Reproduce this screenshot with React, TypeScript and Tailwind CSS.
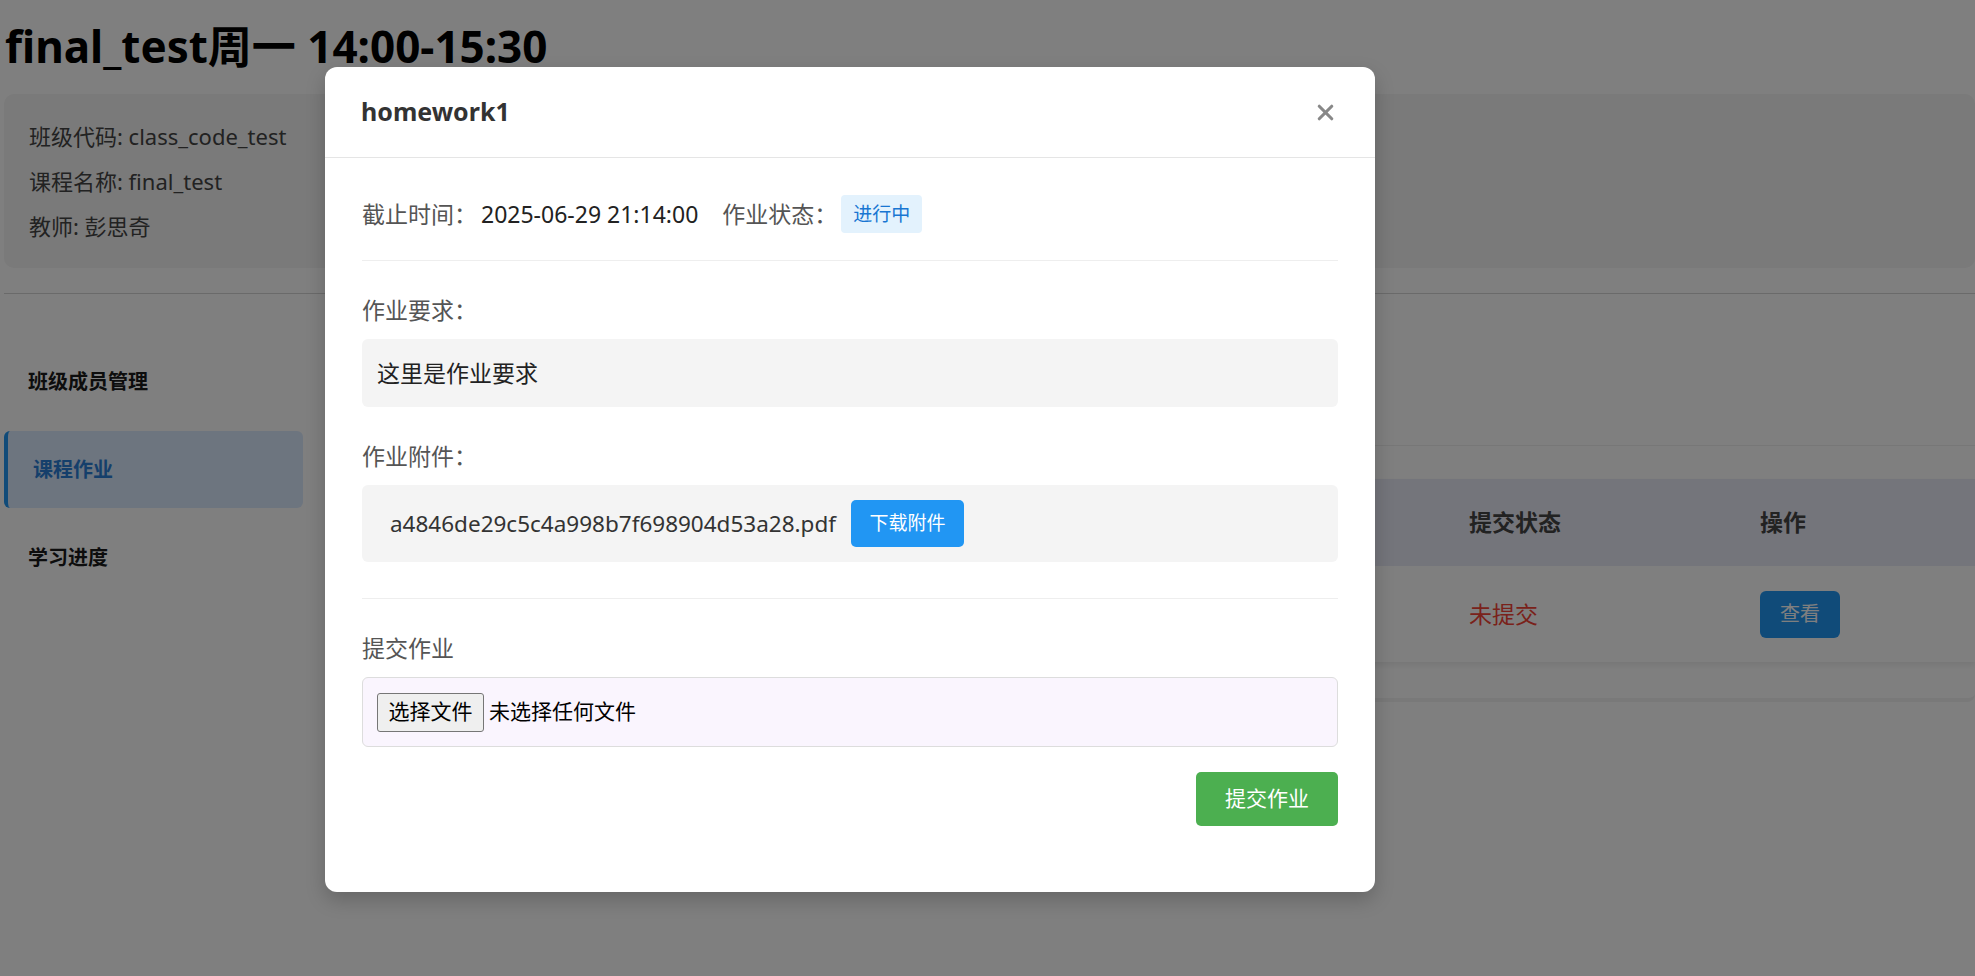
import { X } from 'lucide-react'

const sideItems = [
  { label: '班级成员管理', active: false },
  { label: '课程作业', active: true },
  { label: '学习进度', active: false },
]

function PageBehind() {
  return (
    <div className="pl-[4px]">
      <h1 className="pt-[20px] pl-[1px] text-[44px] font-bold leading-[52px] text-black">
        final_test周一 14:00-15:30
      </h1>

      <div className="mt-[22px] rounded-[10px] bg-[#f4f4f4] pt-[20px] pb-[19px] pl-[25px] text-[22px] leading-[45px] text-[#444]">
        <p>班级代码: class_code_test</p>
        <p>课程名称: final_test</p>
        <p>教师: 彭思奇</p>
      </div>

      <div className="mt-[25px] border-t border-[#d5d5d5]" />

      <div className="flex">
        <nav className="flex w-[299px] flex-col gap-[11px] pt-[49px]">
          {sideItems.map((item) =>
            item.active ? (
              <div
                key={item.label}
                className="flex h-[77px] items-center rounded-[6px] border-l-4 border-[#2196f3] bg-[#dbeafe] pl-[25px] text-[20px] font-bold text-[#2a7fd6]"
              >
                {item.label}
              </div>
            ) : (
              <div key={item.label} className="flex h-[77px] items-center pl-[24px] text-[20px] font-bold text-[#1a1a1a]">
                {item.label}
              </div>
            )
          )}
        </nav>

        {/* the left part of this table sits under the modal */}
        <main className="ml-[40px] flex-1">
          <div className="h-[152px] border-b border-[#eeeeee]" />

          <div className="mt-[33px] bg-white shadow-[0_3px_6px_rgba(0,0,0,0.08)]">
            <div className="grid h-[87px] grid-cols-[1102px_291px_1fr] items-center bg-[#e8eaf6] text-[23px] font-bold text-[#444]">
              <div />
              <div className="px-[24px]">提交状态</div>
              <div className="px-[24px]">操作</div>
            </div>
            <div className="grid h-[96px] grid-cols-[1102px_291px_1fr] items-center text-[23px] text-[#333]">
              <div />
              <div className="px-[24px] text-[#f44336]">未提交</div>
              <div className="px-[24px]">
                <button className="h-[47px] w-[80px] rounded-[6px] bg-[#2196f3] text-[20px] text-white">查看</button>
              </div>
            </div>
          </div>

          <div className="mt-[8px] h-[32px] rounded-[8px] border-b-[4px] border-[#f2f2f2]" />
        </main>
      </div>
    </div>
  )
}

function HomeworkModal() {
  return (
    <div className="absolute top-[67px] left-[325px] w-[1050px] rounded-[12px] bg-white shadow-[0_8px_20px_rgba(0,0,0,0.2)]">
      <div className="flex h-[91px] items-center justify-between border-b border-[#e5e5e5] pr-[37px] pl-[36px]">
        <h3 className="text-[25px] font-bold text-[#333]">homework1</h3>
        <button className="text-[#888888]">
          <X size={25} strokeWidth={3} />
        </button>
      </div>

      <div className="flex flex-col px-[37px] pt-[37px] pb-[66px] text-[23px]">
        <div className="flex h-[38px] items-center">
          <span className="text-[#555]">截止时间：</span>
          <span className="ml-[4px] text-[#222]">2025-06-29 21:14:00</span>
          <span className="ml-[24px] text-[#555]">作业状态：</span>
          <span className="ml-[4px] flex h-[38px] items-center rounded-[4px] bg-[#e3f2fd] px-[12px] text-[19px] text-[#1976d2]">
            进行中
          </span>
        </div>

        <div className="mt-[27px] border-t border-[#eeeeee]" />

        <div className="mt-[34px] leading-[30px] text-[#555]">作业要求：</div>
        <div className="mt-[14px] flex h-[68px] items-center rounded-[6px] bg-[#f4f4f4] px-[15px] text-[#222]">
          这里是作业要求
        </div>

        <div className="mt-[34px] leading-[30px] text-[#555]">作业附件：</div>
        <div className="mt-[14px] flex h-[77px] items-center rounded-[6px] bg-[#f4f4f4] pl-[28px]">
          <span className="text-[22.5px] text-[#333]">a4846de29c5c4a998b7f698904d53a28.pdf</span>
          <button className="ml-[15px] h-[47px] w-[113px] rounded-[5px] bg-[#2196f3] text-[19px] text-white">下载附件</button>
        </div>

        <div className="mt-[36px] border-t border-[#eeeeee]" />

        <div className="mt-[34px] leading-[30px] text-[#555]">提交作业</div>
        <div className="mt-[14px] flex h-[70px] items-center rounded-[6px] border border-[#dddddd] bg-[#faf5fe] pl-[14px]">
          <span className="flex h-[39px] w-[107px] items-center justify-center rounded-[3px] border border-[#767676] bg-[#efefef] text-[21px] text-black">
            选择文件
          </span>
          <span className="ml-[5px] text-[21px] text-black">未选择任何文件</span>
        </div>

        <button className="mt-[25px] h-[54px] w-[142px] self-end rounded-[5px] bg-[#4caf50] text-[21px] text-white">
          提交作业
        </button>
      </div>
    </div>
  )
}

export default function App() {
  return (
    <div className="relative h-[976px] w-full overflow-hidden bg-white font-['Noto_Sans','Noto_Sans_CJK_SC',sans-serif]">
      <PageBehind />
      <div className="absolute inset-0 bg-black opacity-50" />
      <HomeworkModal />
    </div>
  )
}
